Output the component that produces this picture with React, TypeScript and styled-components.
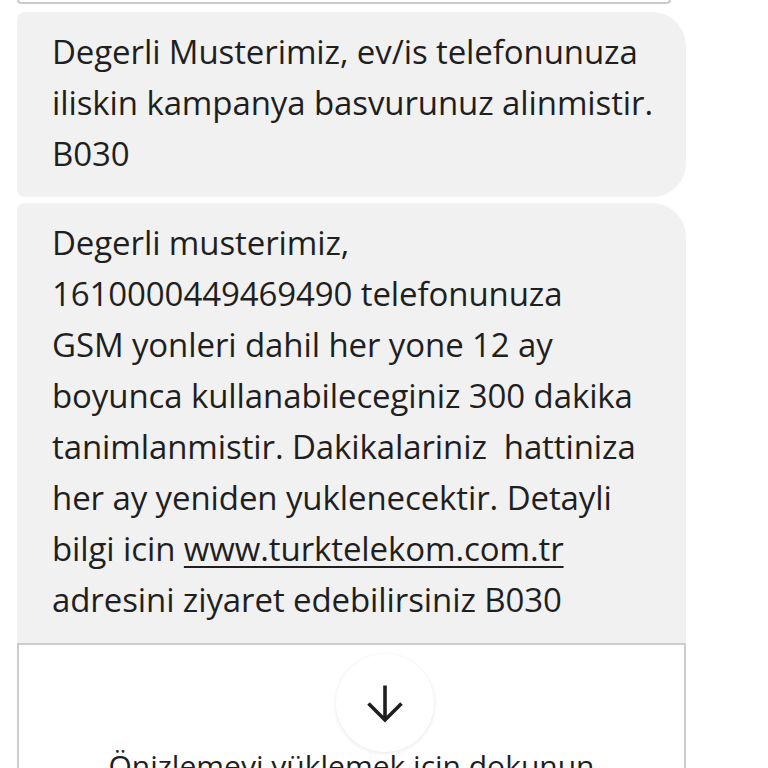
import React from 'react';
import styled, { createGlobalStyle } from 'styled-components';

const GlobalStyle = createGlobalStyle`
  html, body {
    margin: 0;
    padding: 0;
    background: #fff;
    overflow: hidden;
  }
  body {
    font-family: "Open Sans", Roboto, "Liberation Sans", sans-serif;
    color: #1f1f1f;
  }
`;

const Thread = styled.div`
  width: 669px;
  padding-left: 17px;
  display: flex;
  flex-direction: column;
`;

const PrevCard = styled.div`
  width: 650px;
  height: 2px;
  border: 2px solid #cbcbcb;
  border-top: none;
  border-radius: 0 0 18px 18px;
  background: #fff;
  margin-bottom: 8px;
`;

const Bubble = styled.div<{ $attached?: boolean }>`
  background: #f1f1f1;
  padding: 14px 20px 18px 35px;
  font-size: 33px;
  line-height: 51px;
  letter-spacing: -0.1px;
  white-space: nowrap;
  border-radius: ${({ $attached }) => ($attached ? '8px 34px 0 0' : '8px 34px 34px 8px')};
  & + & {
    margin-top: 6px;
  }
`;

const Link = styled.span`
  text-decoration: underline;
  text-underline-offset: 5px;
  text-decoration-thickness: 2px;
`;

const Preview = styled.div`
  border: 2px solid #cdcdcd;
  border-bottom: none;
  background: #fff;
  display: flex;
  flex-direction: column;
  align-items: center;
  padding: 9px 0 24px;
`;

const LoadButton = styled.div`
  flex-shrink: 0;
  width: 98px;
  height: 98px;
  margin-left: 66px;
  border-radius: 50%;
  background: #fff;
  box-shadow: 0 1px 4px rgba(0, 0, 0, 0.1);
  display: flex;
  align-items: center;
  justify-content: center;
`;

const PreviewLabel = styled.div`
  flex-shrink: 0;
  margin-top: -6px;
  font-size: 30px;
  line-height: 40px;
  white-space: nowrap;
`;

const ArrowDown = () => (
  <svg width="40" height="40" viewBox="0 0 40 40" fill="none" stroke="#1f1f1f" strokeWidth="3.6">
    <path d="M20 2.5 V37" />
    <path d="M3.5 20.5 L20 37 L36.5 20.5" strokeLinejoin="miter" />
  </svg>
);

export default function App() {
  return (
    <>
      <GlobalStyle />
      <Thread>
        <PrevCard />
        <Bubble>
          Degerli Musterimiz, ev/is telefonunuza
          <br />
          iliskin kampanya basvurunuz alinmistir.
          <br />
          B030
        </Bubble>
        <Bubble $attached>
          Degerli musterimiz,
          <br />
          1610000449469490 telefonunuza
          <br />
          GSM yonleri dahil her yone 12 ay
          <br />
          boyunca kullanabileceginiz 300 dakika
          <br />
          tanimlanmistir. Dakikalariniz&nbsp; hattiniza
          <br />
          her ay yeniden yuklenecektir. Detayli
          <br />
          bilgi icin <Link>www.turktelekom.com.tr</Link>
          <br />
          adresini ziyaret edebilirsiniz B030
        </Bubble>
        <Preview>
          <LoadButton>
            <ArrowDown />
          </LoadButton>
          <PreviewLabel>Önizlemeyi yüklemek için dokunun</PreviewLabel>
        </Preview>
      </Thread>
    </>
  );
}
